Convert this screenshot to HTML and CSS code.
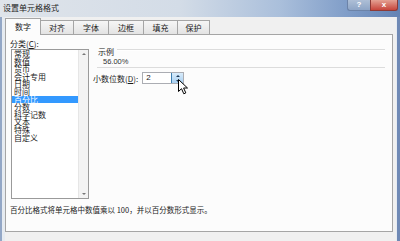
FILE: index.html
```html
<!DOCTYPE html>
<html>
<head>
<meta charset="utf-8">
<link rel="stylesheet" href="styles.css">
</head>
<body>
<div class="window">
  <div class="titlebar">
    <span class="title">设置单元格格式</span>
    <div class="controls">
      <span class="btn help">?</span>
      <span class="btn close">x</span>
    </div>
  </div>
  <div class="frame">
    <div class="client">
      <div class="tabs">
        <div class="tab active w36">数字</div>
        <div class="tab w32">对齐</div>
        <div class="tab w35">字体</div>
        <div class="tab w35">边框</div>
        <div class="tab w34">填充</div>
        <div class="tab w33">保护</div>
      </div>
      <div class="panel">
        <div class="top">
          <div class="left">
            <div class="label">分类(<u>C</u>):</div>
            <div class="listbox">
              <div class="items">
                <div class="item">常规</div>
                <div class="item">数值</div>
                <div class="item">货币</div>
                <div class="item">会计专用</div>
                <div class="item">日期</div>
                <div class="item">时间</div>
                <div class="item sel">百分比</div>
                <div class="item">分数</div>
                <div class="item">科学记数</div>
                <div class="item">文本</div>
                <div class="item">特殊</div>
                <div class="item">自定义</div>
              </div>
              <div class="scroll">
                <span class="arr up"></span>
                <span class="arr down"></span>
              </div>
            </div>
          </div>
          <div class="right">
            <div class="sample-head"><span>示例</span><span class="rule"></span></div>
            <div class="sample-value">56.00%</div>
            <div class="decimals">
              <span class="label">小数位数(<u>D</u>):</span>
              <div class="spinbox">
                <span class="val">2</span>
                <div class="spin">
                  <span class="sarr sup"></span>
                  <span class="sarr sdown"></span>
                </div>
                <svg class="cursor" width="11" height="16" viewBox="0 0 11 16"><path d="M0.5 0.5 L0.5 12.5 L3.5 9.7 L5.8 14.8 L7.8 13.9 L5.6 9 L9.5 9 Z" fill="#fff" stroke="#000" stroke-width="1"/></svg>
              </div>
            </div>
          </div>
        </div>
        <div class="desc">百分比格式将单元格中数值乘以 100，并以百分数形式显示。</div>
      </div>
    </div>
  </div>
</div>
</body>
</html>
```
FILE: styles.css
```css
html, body {
  margin: 0;
  padding: 0;
}
body {
  width: 400px;
  height: 241px;
  overflow: hidden;
  font-family: "Noto Sans CJK SC", "Liberation Sans", sans-serif;
  font-size: 8px;
  color: #1b1b1b;
  background: #f0f0f0;
}
.window {
  width: 400px;
  height: 241px;
  display: flex;
  flex-direction: column;
}
.titlebar {
  height: 17px;
  flex: none;
  display: flex;
  justify-content: space-between;
  align-items: flex-start;
  background: linear-gradient(to right, #dfe4ea 0%, #d3dce7 45%, #aabfdb 70%, #7d9bc7 88%, #6483b4 100%);
}
.title {
  margin-left: 3px;
  line-height: 16px;
  font-size: 8px;
  color: #1e1e1e;
}
.controls {
  display: flex;
  margin-right: 2px;
}
.btn {
  height: 10px;
  line-height: 9px;
  text-align: center;
  color: #fff;
  font-family: "Liberation Sans", sans-serif;
  font-size: 8px;
  font-weight: bold;
}
.help {
  width: 22px;
  background: linear-gradient(#aebfd6, #8ea5c6);
  border-radius: 0 0 0 3px;
  border: 1px solid #6c83a8;
  border-top: none;
  border-right: none;
}
.close {
  width: 26px;
  background: linear-gradient(#e4a193, #c7453b);
  border-radius: 0 0 3px 0;
  border: 1px solid #8d3a36;
  border-top: none;
}
.frame {
  flex: 1;
  display: flex;
  background: #e6ebf1;
  border-left: 2px solid #93a7c6;
  border-right: 3px solid #6f89b5;
}
.client {
  flex: 1;
  margin: 0 1px 0 3px;
  display: flex;
  flex-direction: column;
  background: #f0f0f0;
  padding-bottom: 9px;
}
.tabs {
  height: 16px;
  margin-top: 1px;
  display: flex;
  align-items: flex-end;
  flex: none;
}
.tab {
  height: 14px;
  line-height: 14px;
  text-align: center;
  border: 1px solid #a5a5a5;
  border-bottom: none;
  border-right: none;
  background: linear-gradient(#f6f6f6, #e3e3e3);
  box-sizing: border-box;
  font-size: 8px;
}
.tab:last-child { border-right: 1px solid #a5a5a5; }
.tab.active {
  height: 17px;
  line-height: 16px;
  margin-bottom: -1px;
  background: #fcfcfc;
  position: relative;
  z-index: 1;
  border-right: 1px solid #a5a5a5;
}
.tab.active + .tab { border-left: none; }
.w36 { width: 36px; }
.w32 { width: 32px; }
.w35 { width: 35px; }
.w34 { width: 34px; }
.w33 { width: 33px; }
.panel {
  flex: 1;
  margin-right: 3px;
  border: 1px solid #a5a5a5;
  background: #fcfcfc;
  display: flex;
  flex-direction: column;
}
.top {
  display: flex;
}
.left {
  width: 78px;
  padding: 4px 0 0 5px;
}
.label {
  height: 10px;
  line-height: 10px;
  padding-left: -1px;
  font-size: 8px;
  white-space: nowrap;
}
.left .label { margin-left: -1px; }
.listbox {
  width: 78px;
  height: 150px;
  box-sizing: border-box;
  border: 1px solid #9a9a9a;
  background: #fff;
  display: flex;
}
.items {
  flex: 1;
  padding-top: 0px;
}
.item {
  height: 7.6px;
  line-height: 7.6px;
  padding-left: 2px;
  font-size: 8px;
  white-space: nowrap;
}
.item.sel {
  background: #3399ff;
  color: #fff;
}
.scroll {
  width: 9px;
  background: #f3f3f3;
  border-left: 1px solid #e6e6e6;
  display: flex;
  flex-direction: column;
  justify-content: space-between;
  align-items: center;
  padding: 3px 0 3px;
}
.arr {
  width: 0;
  height: 0;
  border-left: 2px solid transparent;
  border-right: 2px solid transparent;
}
.arr.up { border-bottom: 2px solid #777; }
.arr.down { border-top: 2px solid #777; }
.right {
  flex: 1;
  padding: 11px 7px 0 4px;
}
.sample-head {
  height: 10px;
  display: flex;
  align-items: center;
  gap: 3px;
  padding-left: 5px;
}
.sample-head span:first-child {
  line-height: 10px;
  margin-top: 1px;
}
.rule {
  flex: 1;
  height: 1px;
  background: #dcdcdc;
  border-bottom: 1px solid #fff;
  margin-top: -2px;
}
.sample-value {
  height: 11px;
  line-height: 11px;
  padding-left: 6px;
  border-bottom: 1px solid #dcdcdc;
  font-family: "Liberation Sans", sans-serif;
  font-size: 7.5px;
  color: #333;
  margin-left: 4px;
}
.decimals {
  margin-top: 4px;
  display: flex;
  align-items: center;
  gap: 4px;
  height: 12px;
}
.decimals .label {
  line-height: 12px;
}
.spinbox {
  width: 42px;
  height: 12px;
  box-sizing: border-box;
  border: 1px solid #abadb3;
  background: #fff;
  display: flex;
  position: relative;
}
.val {
  flex: 1;
  line-height: 10px;
  padding-left: 3px;
  font-family: "Liberation Sans", sans-serif;
  font-size: 8px;
}
.spin {
  width: 11px;
  display: flex;
  flex-direction: column;
  align-items: center;
  justify-content: space-around;
  background: linear-gradient(#d9ecfb, #a9d0f1);
  border-left: 1px solid #3c7fb1;
}
.sarr {
  width: 0;
  height: 0;
  border-left: 2px solid transparent;
  border-right: 2px solid transparent;
}
.sup { border-bottom: 2px solid #1c3a5a; }
.sdown { border-top: 2px solid #1c3a5a; }
.cursor {
  position: absolute;
  left: 35px;
  top: 6px;
}
.desc {
  margin-top: 6px;
  padding-left: 4px;
  line-height: 10px;
  font-size: 7.5px;
  white-space: nowrap;
}
```
